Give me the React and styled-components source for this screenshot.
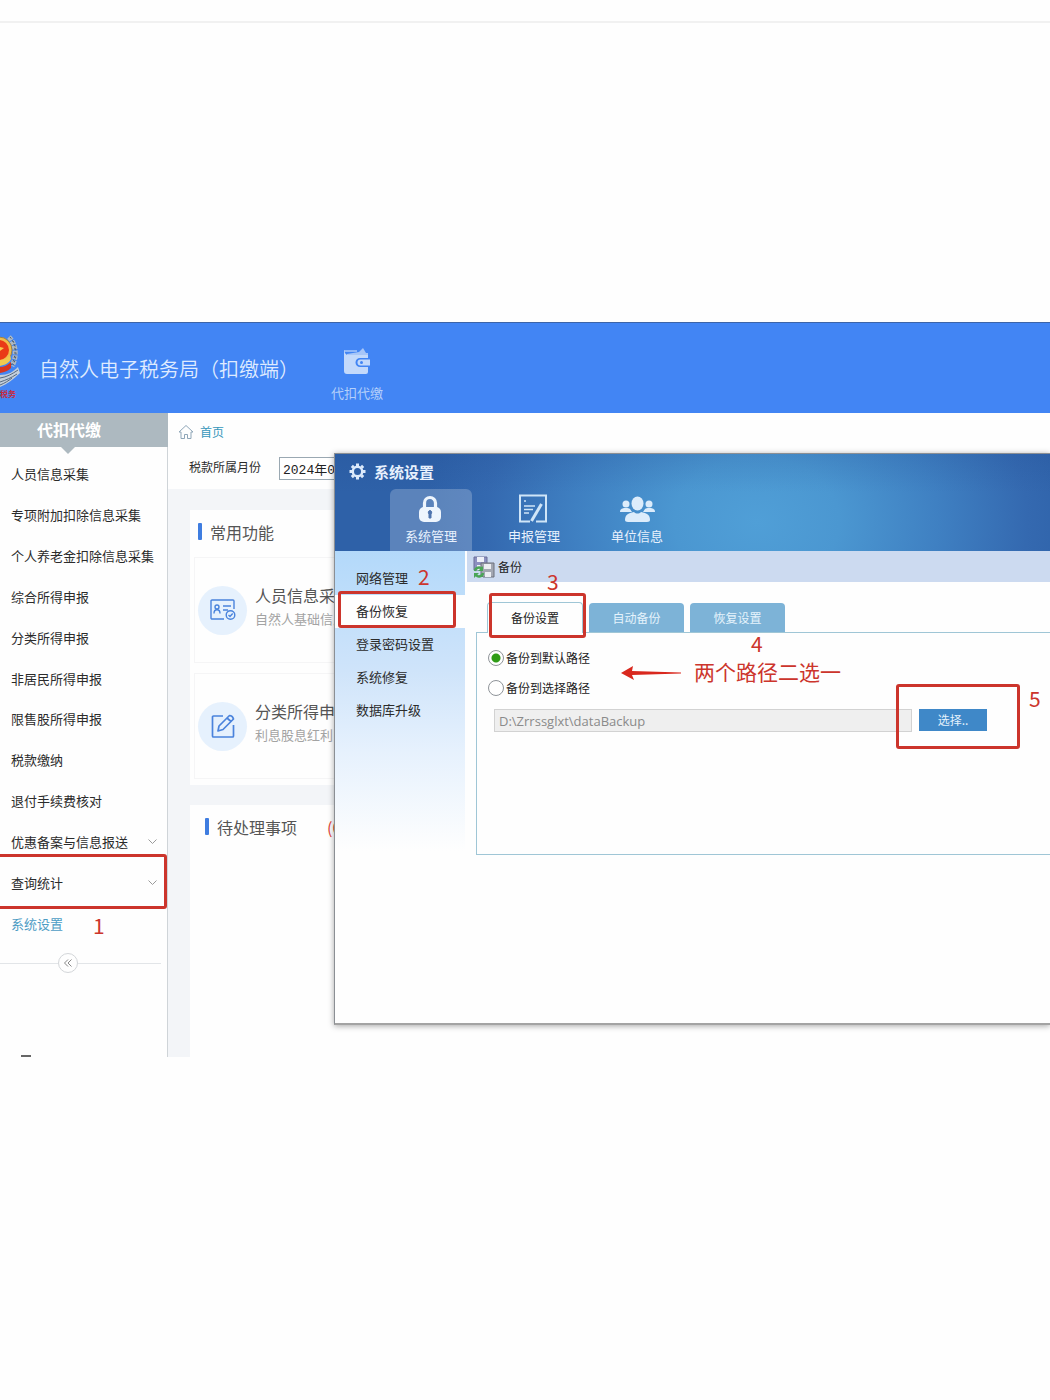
import { useState } from "react";
import styled, { createGlobalStyle, css } from "styled-components";

const red = "#cc352c";
const blue = "#4285f4";
const line = "#9fc6d6";
const sans = `"Noto Sans", "Noto Sans CJK SC", sans-serif`;
const cjk = `"Noto Sans CJK SC", sans-serif`;

const GlobalStyle = createGlobalStyle`
  * {
    box-sizing: border-box;
  }

  body {
    margin: 0;
    background: #fefefe;
    color: #2b2b2b;
    font: 13px/20px ${cjk};
    overflow-x: hidden;
  }

  ul {
    list-style: none;
    margin: 0;
    padding: 0;
  }

  h1, h2, h3, p {
    margin: 0;
    font-weight: 400;
  }

  a {
    color: inherit;
    text-decoration: none;
  }

  button {
    border: 0;
    padding: 0;
    background: none;
    color: inherit;
    font: inherit;
    white-space: nowrap;
  }

  svg {
    display: block;
    flex: none;
  }
`;

const Page = styled.div`
  padding-top: 21px;
`;

const Rule = styled.div`
  height: 2px;
  background: #f1f1f1;
  margin-bottom: 299px;
`;

const Screen = styled.div`
  overflow: hidden;
  border-top: 1px solid #3c64a8;
`;

/* marks drawn over the parts they point at */

const MarkBox = styled.span`
  position: absolute;
  inset: ${(p) => p.$inset};
  border: 3px solid ${red};
  border-radius: 3px;
  pointer-events: none;
  z-index: 2;
`;

const MarkText = styled.span`
  position: absolute;
  left: ${(p) => p.$left}px;
  top: ${(p) => p.$top}px;
  color: ${red};
  font: 21px/24px ${cjk};
  white-space: nowrap;
  pointer-events: none;
  z-index: 2;
`;

/* header */

const Header = styled.header`
  display: flex;
  align-items: center;
  height: 90px;
  background: ${blue};
  color: #dfebff;
`;

const Title = styled.h1`
  width: 282px;
  margin-left: 19px;
  padding-top: 2px;
  font-size: 20px;
  line-height: 28px;
  font-weight: 350;
  white-space: nowrap;
`;

const HeaderLink = styled.a`
  display: flex;
  flex-direction: column;
  align-items: center;
  gap: 7px;
  width: 72px;
  padding-top: 14px;
  color: #b5d0fa;
`;

/* sidebar */

const Workspace = styled.div`
  position: relative;
  display: flex;
  min-height: 644px;
`;

const Sidebar = styled.nav`
  display: flex;
  flex-direction: column;
  flex: none;
  width: 168px;
  border-right: 1px solid #cfd4d8;
  background: #fefefe;
`;

const SidebarTitle = styled.h2`
  position: relative;
  margin-right: -1px;
  padding: 4px 0 6px 37px;
  background: #adb9c0;
  color: #fff;
  font-size: 16px;
  font-weight: 700;
  line-height: 24px;

  &::after {
    content: "";
    position: absolute;
    left: 61px;
    top: 100%;
    border: 7px solid transparent;
    border-top-color: #adb9c0;
    border-bottom: 0;
  }
`;

const Menu = styled.ul`
  display: grid;
  grid-auto-rows: 1fr;
  height: 490px;
  margin-top: 7px;
`;

const MenuItem = styled.li`
  position: relative;

  a {
    display: flex;
    align-items: center;
    justify-content: space-between;
    height: 100%;
    padding: 0 9px 0 11px;
    white-space: nowrap;
    color: ${(p) => (p.$active ? "#4d9cc4" : "#2b2b2b")};
  }
`;

const Collapse = styled.div`
  display: flex;
  align-items: center;
  margin: 9px 6px 0 0;

  &::before,
  &::after {
    content: "";
    height: 1px;
    background: #e2e5e8;
  }

  &::before {
    width: 58px;
  }

  &::after {
    flex: 1;
  }

  button {
    display: grid;
    place-items: center;
    width: 20px;
    height: 20px;
    border: 1px solid #d3d6d9;
    border-radius: 50%;
  }
`;

const FootIcon = styled.span`
  width: 10px;
  height: 2px;
  margin: auto 0 0 21px;
  background: #666;
`;

/* main area */

const Main = styled.main`
  display: flex;
  flex-direction: column;
  flex: 1;
  min-width: 0;
  background: #f3f5f8;
`;

const Breadcrumb = styled.a`
  display: flex;
  align-items: center;
  gap: 6px;
  height: 38px;
  padding-left: 10px;
  background: #fefefe;
  color: #3797bb;
  font-size: 12px;
`;

const Filter = styled.label`
  display: flex;
  align-items: flex-start;
  gap: 18px;
  height: 38px;
  padding: 6px 0 0 21px;
  background: #fefefe;
  font-size: 12px;

  input {
    width: 110px;
    height: 23px;
    padding: 0 3px;
    border: 1px solid #9aa8b2;
    background: #fff;
    color: #222;
    font: 13px "Liberation Mono", "Noto Sans CJK SC", monospace;
  }
`;

const Card = styled.section`
  margin: ${(p) => (p.$grow ? 20 : 21)}px 0 0 22px;
  padding: 0 0 6px 4px;
  background: #fefefe;
  flex: ${(p) => (p.$grow ? 1 : "none")};
`;

const CardTitle = styled.h2`
  display: flex;
  align-items: center;
  gap: 8px;
  height: 47px;
  padding: 0 0 4px ${(p) => (p.$inset ? 11 : 4)}px;
  color: #555;
  font-size: 16px;

  &::before {
    content: "";
    width: 4px;
    height: 17px;
    border-radius: 1px;
    background: #3f7de0;
  }

  em {
    margin-left: 22px;
    color: #e0463e;
    font-style: normal;
  }
`;

const Shortcut = styled.a`
  display: flex;
  align-items: center;
  gap: 8px;
  height: 106px;
  padding-left: 3px;
  border: 1px solid #f5f5f6;
  border-right: 0;
  white-space: nowrap;

  & + & {
    margin-top: 10px;
  }
`;

const Disc = styled.span`
  display: grid;
  place-items: center;
  width: 49px;
  height: 49px;
  border-radius: 50%;
  background: #e6f1fd;
`;

const ShortcutText = styled.span`
  display: grid;
  padding-bottom: 6px;

  strong {
    color: #555;
    font-size: 16px;
    font-weight: 400;
    line-height: 24px;
  }

  small {
    color: #a3a3a3;
    font-size: 13px;
    line-height: 24px;
  }
`;

/* settings window */

const Window = styled.section`
  position: absolute;
  left: 334px;
  right: 0;
  top: 40px;
  border: 1px solid #8b8f94;
  border-right: 0;
  border-bottom: 2px solid #a3a3a3;
  background: #fefefe;
  box-shadow: 0 1px 6px rgba(0, 0, 0, 0.35);
`;

const WindowHead = styled.header`
  height: 97px;
  background:
    linear-gradient(rgba(30, 70, 140, 0.15), transparent 40%),
    radial-gradient(ellipse 330px 260px at 59% 70%, #509fd7 0%, #4b97d1 25%, #3f80c2 55%, #3469b0 82%, #2e61a8 100%);
  color: #e8f1fd;
`;

const WindowTitle = styled.h2`
  display: flex;
  align-items: center;
  gap: 8px;
  height: 35px;
  padding-left: 14px;
  font-size: 15px;
  font-weight: 700;
`;

const Toolbar = styled.div`
  display: flex;
  gap: 21px;
  padding-left: 55px;
`;

const ToolButton = styled.button`
  display: flex;
  flex-direction: column;
  align-items: center;
  justify-content: flex-end;
  gap: 2px;
  width: 82px;
  height: 62px;
  padding-bottom: 5px;
  border-radius: 6px 6px 0 0;
  background: ${(p) => (p.$active ? "rgba(255, 255, 255, 0.22)" : "none")};
`;

const WindowBody = styled.div`
  display: grid;
  grid-template-columns: 130px minmax(0, 1fr);
  gap: 2px;
  min-height: 472px;
`;

const SideNav = styled.nav`
  display: flex;
  flex-direction: column;
  padding-top: 11px;
  background: linear-gradient(#b3d9fa, #cfe4fa 120px, #e6f1fd 200px, #fefefe 300px);
`;

const SideLink = styled.a`
  position: relative;
  padding: 6px 0 7px 21px;
  background: ${(p) => (p.$active ? "#fefefe" : "none")};
`;

const ContentHead = styled.h3`
  display: flex;
  align-items: center;
  gap: 3px;
  height: 31px;
  padding-left: 6px;
  background: #ccdaf0;
  color: #222;
  font-size: 12px;
`;

const Tabs = styled.div`
  display: flex;
  align-items: flex-end;
  gap: 6px;
  margin-left: 9px;
  padding: 20px 0 0 11px;
  font-size: 12px;
`;

const Tab = styled.button`
  position: relative;
  width: 95px;
  height: 29px;
  border-radius: 4px 4px 0 0;
  background: #7db3d7;
  color: #e6f3fc;

  ${(p) =>
    p.$active &&
    css`
      width: 96px;
      height: 31px;
      margin-bottom: -1px;
      border: 1px solid ${line};
      border-bottom: 0;
      background: #fefefe;
      color: #222;
      z-index: 1;
    `}
`;

const Panel = styled.div`
  position: relative;
  min-height: 223px;
  margin-left: 9px;
  padding: 10px 63px 0 11px;
  border: solid ${line};
  border-width: 1px 0 1px 1px;
`;

const Option = styled.label`
  display: flex;
  align-items: center;
  gap: 2px;
  height: 30px;
  font-size: 12px;
  color: #222;

  input {
    appearance: none;
    width: 16px;
    height: 16px;
    margin: 0;
    border: 1px solid #8f9499;
    border-radius: 50%;
    background: #fff;
  }

  input:checked {
    background: radial-gradient(circle, #2f9c16 4px, #fff 5px);
  }
`;

const PathRow = styled.div`
  display: flex;
  gap: 7px;
  margin: 6px 0 0 6px;

  input {
    flex: 1;
    min-width: 0;
    height: 23px;
    padding: 0 4px;
    border: 1px solid #d2d2d2;
    background: #efefef;
    color: #8a8a8a;
    font: 13px "Open Sans", ${sans};
  }
`;

const Choose = styled.div`
  position: relative;

  button {
    width: 68px;
    height: 22px;
    background: #3f88c8;
    color: #e4f1fc;
    font-size: 12px;
  }
`;

const Arrow = styled.svg`
  position: absolute;
  left: 143px;
  top: 32px;
`;

const Emblem = () => (
  <svg width="20" height="70" viewBox="0 0 20 70">
    <path d="M9 4c6 6 9 18 3 29" fill="none" stroke="#aeb9c4" strokeWidth="5" strokeDasharray="4 1" />
    <path d="M10 4c6 7 7 18 1 29M13 8c4 7 4 17 0 24" fill="none" stroke="#4e5b69" strokeDasharray="2 2" />
    <path d="M0 42c8 0 13-3 18-8l2 6C14 46 7 51 0 54z" fill="#c3cfdb" />
    <path d="M0 45c7-1 12-4 18-8M0 49c6-2 11-4 17-8M0 52c5-2 8-4 12-7" stroke="#56697f" fill="none" />
    <circle cx="-1" cy="17" r="13" fill="#f0bd4c" stroke="#9b8149" />
    <circle cx="-1" cy="17" r="10" fill="#ea3a17" />
    <path d="M0 14l4 1-4 3z" fill="#f8c949" />
    <path d="M0 27c4 0 8-2 10-5l1 4c-2 4-6 6-11 7z" fill="#f1c84d" />
    <path d="M0 34c4 0 8-2 11-5v6c-3 3-6 4-11 5z" fill="#d8341d" />
    <text x="0" y="64" fill="#c5293d" fontSize="8" fontWeight="700">
      税务
    </text>
  </svg>
);

const Wallet = () => (
  <svg width="28" height="28" viewBox="0 0 28 28">
    <path d="M4 6l12-2 4-4 3 5h2v4H4z" fill="#a7c6f8" />
    <path d="M1 2v21a3 3 0 0 0 3 3h19a2 2 0 0 0 2-2v-5h-8a4 4 0 0 1 0-9h8V7H5Q2 7 1 2z" fill="#c3d9fb" />
    <path d="M1 3h13" stroke="#dce9fd" />
    <path d="M27 11.500H17.500a3 3 0 0 0 0 6H27z" fill="#c3d9fb" />
    <circle cx="18.500" cy="14.500" r="1.500" fill={blue} />
  </svg>
);

const Chevron = () => (
  <svg width="11" height="8" viewBox="0 0 11 8" fill="none" stroke="#9a9a9a">
    <path d="M1.500 1.500l4 4 4-4" />
  </svg>
);

const DoubleLeft = () => (
  <svg width="10" height="10" viewBox="0 0 10 10" fill="none" stroke="#888">
    <path d="M5 1.500L1.500 5 5 8.500M8.500 1.500L5 5l3.500 3.500" />
  </svg>
);

const House = () => (
  <svg width="16" height="16" viewBox="0 0 16 16" fill="none" stroke="#8fa6b8">
    <path d="M1 8l7-6.500L15 8h-2v6.500H9.500v-4h-3v4H3V8z" strokeLinejoin="round" />
  </svg>
);

const IdCard = () => (
  <svg width="28" height="24" viewBox="0 0 28 24" fill="none" stroke="#4a83dc" strokeWidth="1.400">
    <path d="M15 21H3a1 1 0 0 1-1-1V3a1 1 0 0 1 1-1h21a1 1 0 0 1 1 1v8" />
    <circle cx="8" cy="9" r="2" />
    <path d="M5 15.500c0-5 6-5 6 0M14 8h8M14 12h5" />
    <circle cx="21.500" cy="17" r="4.300" />
    <path d="M19.500 17l1.500 1.500 2.700-3" />
  </svg>
);

const Edit = () => (
  <svg width="26" height="26" viewBox="0 0 26 26" fill="none" stroke="#4a83dc" strokeWidth="1.700">
    <path d="M13 3H3.500a1 1 0 0 0-1 1v19a1 1 0 0 0 1 1h19a1 1 0 0 0 1-1V12" />
    <path d="M8 18l1-5L19.500 2.500q3 0 4 3.500L13 16.500zM17 5l4 3.500" strokeLinejoin="round" />
  </svg>
);

const Gear = () => (
  <svg width="17" height="17" viewBox="0 0 17 17" fill="none" stroke="#dceafb">
    <circle cx="8.500" cy="8.500" r="4.700" strokeWidth="2.400" />
    {[0, 45, 90, 135, 180, 225, 270, 315].map((a) => (
      <path key={a} d="M8.500 0.500v2.500" strokeWidth="3" transform={`rotate(${a} 8.500 8.500)`} />
    ))}
  </svg>
);

const Lock = () => (
  <svg width="30" height="29" viewBox="0 0 30 29">
    <path d="M8.500 14V8a5.500 5.500 0 0 1 11 0v6" fill="none" stroke="#eef5fd" strokeWidth="3.200" />
    <rect x="3" y="12" width="22" height="15" rx="5" fill="#eef5fd" />
    <path d="M14 15.500a2 2 0 0 1 1 3.500v4h-2v-4a2 2 0 0 1 1-3.500z" fill="#4f74ae" stroke="#4f74ae" />
  </svg>
);

const Report = () => (
  <svg width="32" height="30" viewBox="0 0 32 30" fill="none" stroke="#cfe5f8" strokeWidth="2">
    <path d="M18 27.500h10v-26H2v26h10" />
    <path d="M6 7h2M6 12h11M6 15.500h9M6 19h5" strokeWidth="1.500" />
    <path d="M23.500 10L13.500 27" strokeWidth="3" />
  </svg>
);

const Users = () => (
  <svg width="36" height="29" viewBox="0 0 36 29" fill="#dcecfb">
    <circle cx="7" cy="9" r="3.500" />
    <circle cx="30" cy="9" r="3.500" />
    <path d="M1 17c0-3 2-4 6-4 2 0 3 0 4 1l2 3zM36 17c0-3-2-4-6-4-2 0-3 0-4 1l-2 3z" />
    <ellipse cx="18.500" cy="8.500" rx="6" ry="7" />
    <path d="M6 25c0-5 3-7 9-8 2 2 5 2 7 0 6 1 9 3 9 8 0 1-1 2-3 2H9c-2 0-3-1-3-2z" />
  </svg>
);

const Disks = () => (
  <svg width="22" height="22" viewBox="0 0 22 22">
    <path d="M1 1h13v13H1z" fill="#8d90c0" stroke="#6a6e98" />
    <path d="M4 1h7v5H4zM4 9h7v5H4z" fill="#eef0f8" />
    <path d="M8 7h13v14H10l-2-2z" fill="#a3a7b2" stroke="#6c707c" />
    <path d="M11 8h7v5h-7zM12 16h6v5h-6z" fill="#eceef2" />
    <path d="M2 15a4 4 0 0 1 7-2M10 17a4 4 0 0 1-7 2" fill="none" stroke="#4aa556" strokeWidth="2.500" />
    <path d="M10 10v5H5zM1 22v-5h5z" fill="#4aa556" />
  </svg>
);

const menu = [
  { text: "人员信息采集" },
  { text: "专项附加扣除信息采集" },
  { text: "个人养老金扣除信息采集" },
  { text: "综合所得申报" },
  { text: "分类所得申报" },
  { text: "非居民所得申报" },
  { text: "限售股所得申报" },
  { text: "税款缴纳" },
  { text: "退付手续费核对" },
  { text: "优惠备案与信息报送", more: true },
  { text: "查询统计", more: true, boxed: true },
  { text: "系统设置", active: true, mark: "1" },
];

const tools = [
  { text: "系统管理", icon: <Lock />, active: true },
  { text: "申报管理", icon: <Report /> },
  { text: "单位信息", icon: <Users /> },
];

const SettingsWindow = () => {
  const [target, setTarget] = useState("default");

  return (
    <Window>
      <WindowHead>
        <WindowTitle>
          <Gear />
          系统设置
        </WindowTitle>
        <Toolbar>
          {tools.map((t) => (
            <ToolButton key={t.text} type="button" $active={t.active}>
              {t.icon}
              {t.text}
            </ToolButton>
          ))}
        </Toolbar>
      </WindowHead>
      <WindowBody>
        <SideNav>
          <SideLink href="#network">
            网络管理
            <MarkText $left={83} $top={2}>2</MarkText>
          </SideLink>
          <SideLink href="#backup" $active>
            备份恢复
            <MarkBox $inset="-4px 9px 0 3px" />
          </SideLink>
          <SideLink href="#password">登录密码设置</SideLink>
          <SideLink href="#repair">系统修复</SideLink>
          <SideLink href="#database">数据库升级</SideLink>
        </SideNav>
        <div>
          <ContentHead>
            <Disks />
            备份
          </ContentHead>
          <Tabs>
            <Tab type="button" $active>
              备份设置
              <MarkBox $inset="-10px -4px -5px 1px" />
              <MarkText $left={59} $top={-34}>3</MarkText>
            </Tab>
            <Tab type="button">自动备份</Tab>
            <Tab type="button">
              恢复设置
              <MarkText $left={61} $top={28}>4</MarkText>
            </Tab>
          </Tabs>
          <Panel>
            <Option>
              <input
                type="radio"
                name="target"
                checked={target === "default"}
                onChange={() => setTarget("default")}
              />
              备份到默认路径
            </Option>
            <Option>
              <input
                type="radio"
                name="target"
                checked={target === "custom"}
                onChange={() => setTarget("custom")}
              />
              备份到选择路径
            </Option>
            <Arrow width="62" height="16" viewBox="0 0 62 16" fill="#d9281e">
              <path d="M1 8L13 1l-1 5 49 1.500v1L12 10l2 5z" />
            </Arrow>
            <MarkText $left={217} $top={26}>两个路径二选一</MarkText>
            <PathRow>
              <input aria-label="备份路径" value="D:\Zrrssglxt\dataBackup" readOnly />
              <Choose>
                <button type="button">选择..</button>
                <MarkBox $inset="-25px -33px -17px -23px" />
                <MarkText $left={110} $top={-23}>5</MarkText>
              </Choose>
            </PathRow>
          </Panel>
        </div>
      </WindowBody>
    </Window>
  );
};

export default function App() {
  return (
    <Page>
      <GlobalStyle />
      <Rule />
      <Screen>
        <Header>
          <Emblem />
          <Title>自然人电子税务局（扣缴端）</Title>
          <HeaderLink href="#withholding">
            <Wallet />
            代扣代缴
          </HeaderLink>
        </Header>
        <Workspace>
          <Sidebar>
            <SidebarTitle>代扣代缴</SidebarTitle>
            <Menu>
              {menu.map((m) => (
                <MenuItem key={m.text} $active={m.active}>
                  <a href="#menu">
                    {m.text}
                    {m.more && <Chevron />}
                  </a>
                  {m.boxed && <MarkBox $inset="-8px 0 -6px -4px" />}
                  {m.mark && <MarkText $left={93} $top={10}>{m.mark}</MarkText>}
                </MenuItem>
              ))}
            </Menu>
            <Collapse>
              <button type="button" aria-label="收起">
                <DoubleLeft />
              </button>
            </Collapse>
            <FootIcon />
          </Sidebar>
          <Main>
            <Breadcrumb href="#home">
              <House />
              首页
            </Breadcrumb>
            <Filter>
              税款所属月份
              <input value="2024年01月" readOnly />
            </Filter>
            <Card>
              <CardTitle>常用功能</CardTitle>
              <Shortcut href="#person">
                <Disc>
                  <IdCard />
                </Disc>
                <ShortcutText>
                  <strong>人员信息采集</strong>
                  <small>自然人基础信息</small>
                </ShortcutText>
              </Shortcut>
              <Shortcut href="#income">
                <Disc>
                  <Edit />
                </Disc>
                <ShortcutText>
                  <strong>分类所得申报</strong>
                  <small>利息股息红利</small>
                </ShortcutText>
              </Shortcut>
            </Card>
            <Card $grow>
              <CardTitle $inset>
                待处理事项<em>(0)</em>
              </CardTitle>
            </Card>
          </Main>
          <SettingsWindow />
        </Workspace>
      </Screen>
    </Page>
  );
}
